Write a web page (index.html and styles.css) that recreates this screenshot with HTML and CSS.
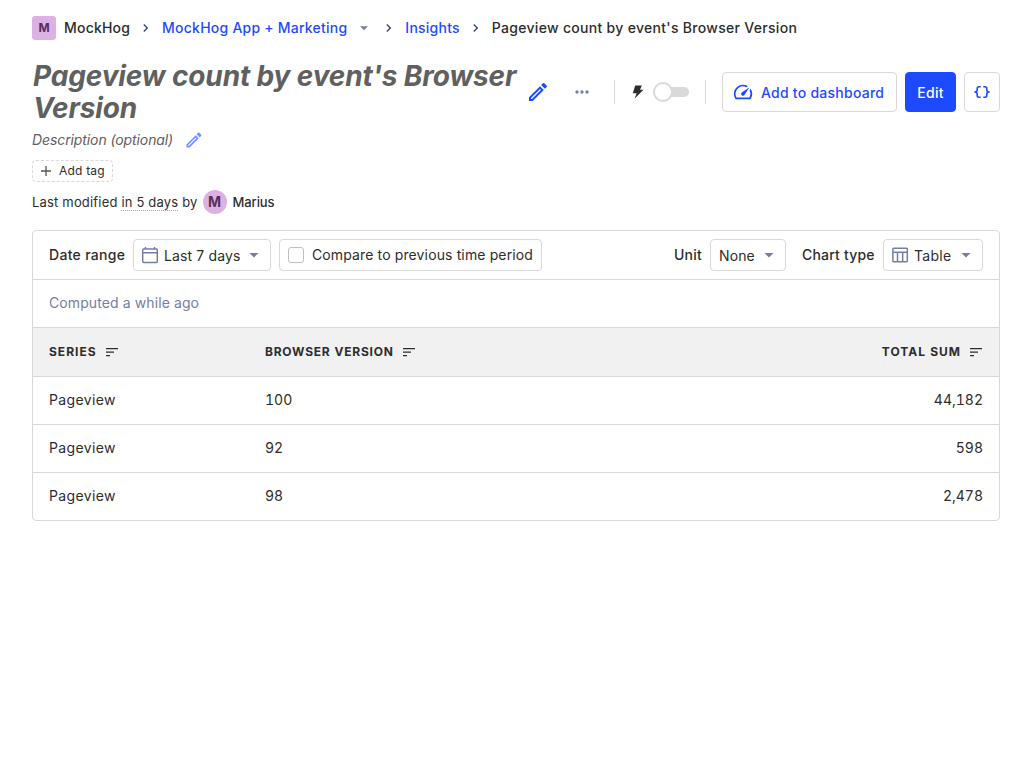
FILE: index.html
```html
<!DOCTYPE html>
<html lang="en">
<head>
<meta charset="utf-8">
<title>Pageview count by event's Browser Version</title>
<link rel="stylesheet" href="styles.css">
</head>
<body>
<svg class="sprite" aria-hidden="true">
  <symbol id="pencil" viewBox="0 0 24 24"><path d="m14.06 9.02.92.92L5.92 19H5v-.92l9.06-9.06M17.66 3c-.25 0-.51.1-.7.29l-1.83 1.83 3.75 3.75 1.83-1.83a.996.996 0 0 0 0-1.41l-2.34-2.34c-.2-.2-.45-.29-.71-.29Zm-3.6 3.19L3 17.25V21h3.75L17.81 9.94l-3.75-3.75Z"/></symbol>
  <symbol id="chevron" viewBox="0 0 24 24"><path d="M9.4 6 8 7.4l4.6 4.6L8 16.6 9.4 18l6-6z"/></symbol>
  <symbol id="caret" viewBox="0 0 24 24"><path d="M6 9.3h12l-6 6z"/></symbol>
  <symbol id="sort" viewBox="0 0 14 10"><path d="M1 1h12v1.200H1zM1 4.600h8v1.200H1zM1 8h4v1.200H1z"/></symbol>
</svg>
<main class="page">
  <nav class="crumbs">
    <span class="mark mark-square">M</span>
    <span class="crumb crumb-org">MockHog</span>
    <svg class="chevron"><use href="#chevron"/></svg>
    <a class="crumb link">MockHog App + Marketing</a>
    <svg class="crumb-caret"><use href="#caret"/></svg>
    <svg class="chevron"><use href="#chevron"/></svg>
    <a class="crumb link">Insights</a>
    <svg class="chevron"><use href="#chevron"/></svg>
    <span class="crumb">Pageview count by event's Browser Version</span>
  </nav>

  <header class="head">
    <h1 class="title">Pageview count by event's Browser Version</h1>
    <svg class="title-edit"><use href="#pencil"/></svg>
    <div class="actions">
      <svg class="more" viewBox="0 0 24 24"><circle cx="6" cy="12" r="2"/><circle cx="12" cy="12" r="2"/><circle cx="18" cy="12" r="2"/></svg>
      <span class="rule"></span>
      <svg class="bolt" viewBox="0 0 12 14"><path d="M3.200.5h6.600L8 4.700h3.500L2.700 13.500l1.900-5.300H.8z"/></svg>
      <span class="switch"><span class="knob"></span></span>
      <span class="rule"></span>
      <button class="btn btn-dash"><svg class="gauge" viewBox="0 0 24 24"><path d="m20.38 8.57-1.23 1.85a8 8 0 0 1-.22 7.58H5.07A8 8 0 0 1 15.58 6.85l1.85-1.23A10 10 0 0 0 3.35 19a2 2 0 0 0 1.72 1h13.85a2 2 0 0 0 1.74-1 10 10 0 0 0-.27-10.44zm-9.79 6.84a2 2 0 0 0 2.83 0l5.66-8.49-8.49 5.66a2 2 0 0 0 0 2.83z"/></svg><span>Add to dashboard</span></button>
      <button class="btn btn-edit"><span>Edit</span></button>
      <button class="btn btn-code"><svg class="braces" viewBox="0 0 16 14"><path d="M6.700 1.800H5.200q-2 0-2 1.700v1.400Q3.200 7 .4 7q2.800 0 2.800 2.100v1.400q0 1.700 2 1.700h1.500M9.300 1.800h1.500q2 0 2 1.700v1.400Q12.800 7 15.600 7q-2.800 0-2.800 2.100v1.400q0 1.700-2 1.700H9.300"/></svg></button>
    </div>
  </header>

  <div class="desc"><span class="desc-text">Description (optional)</span><svg class="desc-edit"><use href="#pencil"/></svg></div>
  <button class="tag"><svg class="plus" viewBox="0 0 10 10"><path d="M5 0v10M0 5h10"/></svg>Add tag</button>
  <div class="modified"><span>Last modified <span class="when">in 5 days</span> by</span><span class="mark mark-round">M</span><span class="author">Marius</span></div>

  <section class="card">
    <div class="filters">
      <span class="label label-date">Date range</span>
      <button class="field field-date"><svg class="field-icon" viewBox="0 0 18 18"><path d="M2.600 3h12.800q.9 0 .9.9v11.700q0 .9-.9.9H2.600q-.9 0-.9-.9V3.900q0-.9.9-.9zM1.700 6.800h14.600M4.500 1v2M13.500 1v2"/></svg><span class="value">Last 7 days</span><svg class="caret"><use href="#caret"/></svg></button>
      <label class="field field-compare"><span class="box"></span>Compare to previous time period</label>
      <span class="label label-unit">Unit</span>
      <button class="field field-unit"><span class="value">None</span><svg class="caret"><use href="#caret"/></svg></button>
      <span class="label label-chart">Chart type</span>
      <button class="field field-chart"><svg class="field-icon" viewBox="0 0 18 18"><path d="M2.700 2.300h12.800q.8 0 .8.800v11.800q0 .8-.8.8H2.700q-.8 0-.8-.8V3.100q0-.8.8-.8zM1.900 6.300h14.400M6.500 6.300v9.400M11.700 6.300v9.400"/></svg><span class="value">Table</span><svg class="caret"><use href="#caret"/></svg></button>
    </div>
    <div class="computed">Computed a while ago</div>
    <div class="row row-head">
      <span class="cell cell-wide">Series<svg class="sort"><use href="#sort"/></svg></span>
      <span class="cell">Browser version<svg class="sort"><use href="#sort"/></svg></span>
      <span class="cell cell-wide end">Total sum<svg class="sort"><use href="#sort"/></svg></span>
    </div>
    <div class="row"><span class="cell">Pageview</span><span class="cell num">100</span><span class="cell num end">44,182</span></div>
    <div class="row"><span class="cell">Pageview</span><span class="cell num">92</span><span class="cell num end">598</span></div>
    <div class="row"><span class="cell">Pageview</span><span class="cell num">98</span><span class="cell num end">2,478</span></div>
  </section>
</main>
</body>
</html>
```
FILE: styles.css
```css
* { box-sizing: border-box; }
body { margin: 0; background: #fff; color: #2d2d2d; font: 14px/20px Inter, sans-serif; }
button { font: inherit; color: inherit; background: #fff; margin: 0; letter-spacing: inherit; }
svg { flex: none; fill: currentColor; }
.sprite { position: absolute; width: 0; height: 0; }
.page { padding: 16px 32px; }

.crumbs { display: flex; align-items: center; height: 24px; font-weight: 500; white-space: nowrap; letter-spacing: .3px; }
.crumb-org { margin-left: 8px; letter-spacing: .2px; }
.link { color: #1d4aff; letter-spacing: .23px; }
.chevron { width: 16px; height: 16px; margin: 0 8px; color: #35416b; }
.crumb-caret { width: 16px; height: 16px; margin: 0 1px 0 9px; color: #747ea1; }
.mark { display: flex; align-items: center; justify-content: center; width: 24px; height: 24px; background: #dcb1e3; color: #572e5e; font-weight: 700; letter-spacing: 0; }
.mark-square { border-radius: 3px; font-size: 12px; }
.mark-round { border-radius: 50%; font-size: 14px; margin: 0 6px 0 5px; }

.head { display: flex; align-items: center; margin-top: 20px; height: 64px; }
.title { width: 488px; margin: 0; padding-left: 1px; font-size: 28px; line-height: 32px; font-weight: 700; font-style: italic; letter-spacing: -.14px; color: #606060; }
.title-edit { width: 24px; height: 24px; margin-left: 6px; color: #1d4aff; }
.actions { display: flex; align-items: center; margin-left: auto; }
.more { width: 20px; height: 20px; color: #747ea1; }
.rule { width: 1px; height: 24px; background: #d9d9d9; }
.more + .rule { margin-left: 22px; }
.bolt { width: 12px; height: 14px; margin: 0 9px 0 17px; color: #2d2d2d; }
.switch { position: relative; width: 36px; height: 20px; margin-right: 16px; }
.switch::before { content: ""; position: absolute; inset: 5px 0; border-radius: 5px; background: #d9d9d9; }
.knob { position: absolute; left: 0; top: 0; width: 20px; height: 20px; border: 2px solid #d9d9d9; border-radius: 50%; background: #fff; }
.btn { display: flex; align-items: center; justify-content: center; height: 40px; padding: 0; border: 1px solid #d9d9d9; border-radius: 4px; font-weight: 500; letter-spacing: .25px; color: #1d4aff; white-space: nowrap; }
.btn span { padding-top: 2px; }
.btn-dash { width: 175px; margin-left: 16px; padding-left: 9px; justify-content: flex-start; gap: 7px; }
.gauge { width: 22px; height: 22px; }
.btn-edit { width: 51px; margin: 0 8px; background: #1d4aff; border-color: #1d4aff; color: #fff; }
.btn-code { width: 36px; }
.braces { width: 16px; height: 14px; fill: none; stroke: currentColor; stroke-width: 1.6; }

.desc { display: flex; align-items: center; height: 24px; margin-top: 4px; }
.desc-text { width: 141px; font-style: italic; letter-spacing: -.1px; color: #606060; white-space: nowrap; }
.desc-edit { width: 20px; height: 20px; margin-left: 11px; color: #1d4aff; opacity: .6; }
.tag { display: flex; align-items: center; width: 81px; height: 22px; margin-top: 8px; padding: 0 0 0 8px; border: 1px dashed #d9d9d9; border-radius: 4px; font-size: 12px; letter-spacing: .2px; white-space: nowrap; }
.plus { width: 10px; height: 10px; margin-right: 8px; fill: none; stroke: #555; stroke-width: 1.3; }
.modified { display: flex; align-items: center; height: 24px; margin-top: 8px; font-size: 13px; letter-spacing: .18px; white-space: nowrap; }
.when { display: inline-block; line-height: 16px; border-bottom: 1px dotted #a0a0a0; }
.author { font-weight: 500; letter-spacing: -.1px; }

.card { margin-top: 16px; border: 1px solid #d9d9d9; border-radius: 4px; overflow: hidden; }
.filters { display: flex; align-items: center; height: 48px; padding: 0 16px; white-space: nowrap; }
.label { font-weight: 500; margin-right: 8px; letter-spacing: .2px; }
.label-date { width: 76px; letter-spacing: .3px; }
.label-unit { width: 28px; margin-left: auto; }
.label-chart { width: 73px; margin-left: 16px; }
.field { display: flex; align-items: center; height: 32px; padding: 0 8px; border: 1px solid #d9d9d9; border-radius: 4px; letter-spacing: .13px; }
.value { padding-top: 2px; }
.field-date { width: 138px; }
.field-compare { width: 263px; margin-left: 8px; }
.field-unit { width: 76px; }
.field-chart { width: 100px; letter-spacing: .3px; }
.field-icon { width: 18px; height: 18px; margin: 0 5px 0 -1px; fill: none; stroke: #747ea1; stroke-width: 1.5; }
.caret { width: 18px; height: 18px; margin-left: auto; margin-right: -1px; color: #747ea1; }
.box { width: 16px; height: 16px; margin-right: 8px; border: 1px solid #bfbfbf; border-radius: 3px; }
.computed { display: flex; align-items: center; height: 48px; padding: 0 16px 2px; border-top: 1px solid #d9d9d9; letter-spacing: .1px; color: #747ea1; }
.row { display: grid; grid-template-columns: 216px 1fr 200px; align-items: center; height: 48px; padding: 0 16px 2px; border-top: 1px solid #d9d9d9; letter-spacing: .35px; font-variant-numeric: tabular-nums; }
.row-head { height: 49px; padding-bottom: 0; background: #f1f1f1; font-size: 12px; font-weight: 700; letter-spacing: .76px; text-transform: uppercase; }
.cell { display: flex; align-items: center; }
.cell-wide { letter-spacing: 1px; }
.num { letter-spacing: 0; }
.end { justify-content: flex-end; }
.sort { width: 14px; height: 10px; margin-left: 8px; }
```
